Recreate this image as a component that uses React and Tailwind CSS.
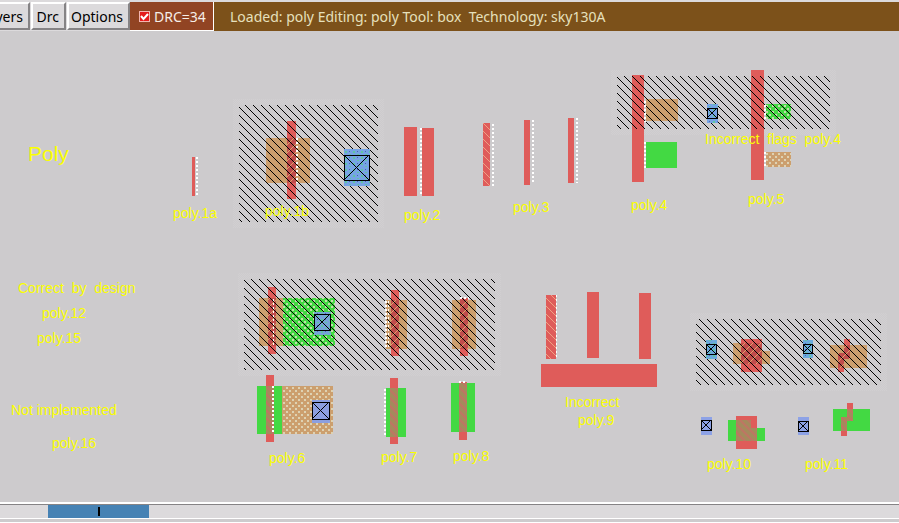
import React from "react";

const RED = "#df5c5a";
const GREEN = "#43d943";
const TAN = "#cc9f6e";

// [x, y, width, height] of every n-well region
const wells = [
  [239, 105, 139, 117],
  [617, 76, 213, 53],
  [244, 279, 251, 91],
  [696, 319, 185, 66],
];

const shapes = [
  [192, 157, 3, 39, RED],
  [266, 138, 44, 45, TAN],
  [287, 121, 9, 78, RED],
  [287, 138, 9, 45, "url(#gate)"],
  [404, 127, 13, 69, RED],
  [422, 128, 12, 68, RED],
  [483, 123, 7, 63, RED],
  [483, 123, 7, 63, "url(#resistor)"],
  [524, 120, 6, 65, RED],
  [568, 118, 6, 65, RED],
  [632, 75, 12, 107, RED],
  [646, 99, 32, 22, TAN],
  [646, 142, 31, 26, GREEN],
  [751, 70, 13, 110, RED],
  [766, 104, 25, 15, GREEN],
  [766, 104, 25, 15, "url(#dots)"],
  [766, 152, 25, 15, TAN],
  [766, 152, 25, 15, "url(#dots)"],
  [259, 298, 24, 48, TAN],
  [283, 298, 52, 48, GREEN],
  [283, 298, 52, 48, "url(#dots)"],
  [268, 287, 8, 67, RED],
  [268, 298, 8, 48, "url(#gate)"],
  [386, 300, 21, 49, TAN],
  [391, 290, 8, 66, RED],
  [391, 300, 8, 49, "url(#gate)"],
  [452, 300, 24, 49, TAN],
  [460, 298, 8, 58, RED],
  [460, 300, 8, 49, "url(#gate)"],
  [257, 386, 25, 48, GREEN],
  [282, 386, 51, 48, TAN],
  [282, 386, 51, 48, "url(#dots)"],
  [266, 375, 8, 67, RED],
  [266, 386, 8, 48, "url(#channel)"],
  [386, 388, 20, 49, GREEN],
  [390, 378, 8, 66, RED],
  [390, 388, 8, 49, "url(#channel)"],
  [451, 383, 24, 49, GREEN],
  [459, 382, 8, 58, RED],
  [459, 383, 8, 49, "url(#channel)"],
  [546, 295, 10, 64, RED],
  [546, 295, 10, 64, "url(#resistor)"],
  [587, 292, 12, 66, RED],
  [639, 293, 12, 66, RED],
  [541, 364, 116, 23, RED],
  [733, 343, 28, 21, TAN],
  [761, 351, 9, 13, TAN],
  [741, 339, 21, 33, RED],
  [741, 343, 21, 21, "url(#gate)"],
  [830, 345, 37, 23, TAN],
  [844, 339, 6, 20, RED],
  [838, 353, 6, 19, RED],
  [844, 345, 6, 14, "url(#gate)"],
  [838, 353, 6, 15, "url(#gate)"],
  [728, 420, 23, 21, GREEN],
  [751, 428, 14, 13, GREEN],
  [736, 416, 21, 33, RED],
  [736, 420, 15, 21, "url(#channel)"],
  [751, 428, 6, 13, "url(#channel)"],
  [833, 409, 37, 22, GREEN],
  [847, 403, 6, 18, RED],
  [841, 417, 6, 19, RED],
  [847, 409, 6, 12, "url(#channel)"],
  [841, 417, 6, 14, "url(#channel)"],
];

// [x, top, bottom] of every dotted error edge
const errors = [
  [197, 157, 196],
  [297, 138, 183],
  [421, 128, 196],
  [493, 124, 186],
  [533, 120, 184],
  [577, 118, 183],
  [645, 101, 122],
  [645, 142, 168],
  [765, 105, 120],
  [765, 152, 168],
  [386, 301, 349],
  [385, 389, 436],
  [273, 386, 434],
];

const fineErrors = [
  [273, 299, 346],
  [388, 301, 349],
  [556, 295, 359],
];

// [x, y, size, halo top, halo bottom, fill, speckled]
const contacts = [
  [344, 155, 25, 6, 5, "#76a4e4", true],
  [707, 108, 10, 4, 4, "#76a4e4", true],
  [314, 314, 16, 2, 4, "#76a3d8", true],
  [312, 402, 17, 2, 3, "#8c9fe0", false],
  [706, 344, 10, 4, 4, "#6caadc", true],
  [803, 344, 9, 4, 4, "#6caadc", true],
  [701, 420, 10, 3, 4, "#8da2e6", false],
  [798, 421, 10, 4, 3, "#8da2e6", false],
];

const labels = [
  [173, 218, "poly.1a"],
  [265, 216, "poly.1b"],
  [404, 220, "poly.2"],
  [513, 212, "poly.3"],
  [631, 210, "poly.4"],
  [748, 204, "poly.5"],
  [705, 144, "Incorrect  flags  poly.4"],
  [18, 293, "Correct  by  design"],
  [42, 318, "poly.12"],
  [37, 343, "poly.15"],
  [11, 415, "Not implemented"],
  [52, 448, "poly.16"],
  [269, 463, "poly.6"],
  [381, 462, "poly.7"],
  [453, 461, "poly.8"],
  [565, 407, "Incorrect"],
  [578, 425, "poly.9"],
  [707, 469, "poly.10"],
  [805, 469, "poly.11"],
];

function Contact({ x, y, size, top, bottom, fill, speckled }) {
  const right = x + size;
  const low = y + size;
  return (
    <g>
      <rect x={x} y={y - top} width={size + 1} height={size + top + bottom + 1} fill={fill} />
      {speckled && (
        <rect x={x} y={y - top} width={size + 1} height={size + top + bottom + 1} fill="url(#speckle)" />
      )}
      <path d={`M${x} ${y}L${right} ${low}M${right} ${y}L${x} ${low}`} stroke="#000" fill="none" />
      <rect x={x + 0.5} y={y + 0.5} width={size} height={size} stroke="#000" fill="none" />
    </g>
  );
}

function LayoutCanvas() {
  return (
    <svg viewBox="0 31 899 471" className="block h-full w-full" shapeRendering="crispEdges" role="img" aria-label="Poly layout">
      <defs>
        <pattern id="well" width="8" height="8" patternUnits="userSpaceOnUse">
          <path d="M4 0h1v1h-1zM5 1h1v1h-1zM6 2h1v1h-1zM7 3h1v1h-1zM0 4h1v1h-1zM1 5h1v1h-1zM2 6h1v1h-1zM3 7h1v1h-1z" fill="#000" />
        </pattern>
        <pattern id="halo" width="2" height="2" patternUnits="userSpaceOnUse">
          <path d="M0 0h1v1h-1zM1 1h1v1h-1z" fill="#d1cfd1" />
        </pattern>
        <pattern id="dots" width="6" height="6" patternUnits="userSpaceOnUse">
          <path d="M1 0h2v2h-2zM4 3h2v2h-2z" fill="#e2dec4" fillOpacity="0.8" />
        </pattern>
        <pattern id="gate" width="8" height="8" patternUnits="userSpaceOnUse">
          <rect width="8" height="8" fill="#c04c4c" />
          <path d="M-1 9L9 -1M-1 1L1 -1M7 9L9 7" stroke="#dfa06a" shapeRendering="auto" />
        </pattern>
        <pattern id="channel" width="8" height="8" patternUnits="userSpaceOnUse">
          <rect width="8" height="8" fill="#a58a5c" />
          <path d="M-1 -1L9 9M-1 7L1 9M7 -1L9 1" stroke="#bf7563" strokeWidth="2" shapeRendering="auto" />
        </pattern>
        <pattern id="resistor" width="8" height="8" patternUnits="userSpaceOnUse">
          <path d="M-1 -1L9 9M-1 7L1 9M7 -1L9 1" stroke="#f0a184" shapeRendering="auto" />
        </pattern>
        <pattern id="speckle" width="8" height="6" patternUnits="userSpaceOnUse">
          <path d="M1 1h2v2h-2zM5 4h2v1h-2z" fill="#5fc6a0" />
          <path d="M5 1h1v1h-1z" fill="#4c5fb5" />
        </pattern>
      </defs>

      {wells.map(([x, y, w, h]) => (
        <rect key={`${x}-${y}`} x={x - 6} y={y - 6} width={w + 12} height={h + 12} fill="url(#halo)" />
      ))}
      {wells.map(([x, y, w, h]) => (
        <rect key={`${x}-${y}`} x={x} y={y} width={w} height={h} fill="#cdcbcd" />
      ))}
      {shapes.map(([x, y, w, h, fill], i) => (
        <rect key={i} x={x} y={y} width={w} height={h} fill={fill} />
      ))}
      {wells.map(([x, y, w, h]) => (
        <rect key={`${x}-${y}`} x={x} y={y} width={w} height={h} fill="url(#well)" />
      ))}
      {errors.map(([x, top, bottom]) => (
        <path key={`${x}-${top}`} d={`M${x} ${top}V${bottom}`} stroke="#fff" strokeWidth="2" strokeDasharray="2 2" />
      ))}
      {fineErrors.map(([x, top, bottom]) => (
        <path key={`${x}-${top}`} d={`M${x + 0.5} ${top}V${bottom}`} stroke="#fff" strokeDasharray="2 2" />
      ))}
      <path d="M460 298H469M459 382H467" stroke="#fff" strokeWidth="2" strokeDasharray="2 2" />
      {contacts.map(([x, y, size, top, bottom, fill, speckled]) => (
        <Contact key={`${x}-${y}`} x={x} y={y} size={size} top={top} bottom={bottom} fill={fill} speckled={speckled} />
      ))}

      <g fill="#fbff00" className="font-['Liberation_Sans',sans-serif] text-[14px]">
        <text x="28" y="161" className="text-[21px]">Poly</text>
        {labels.map(([x, y, text]) => (
          <text key={`${x}-${y}`} x={x} y={y} className="whitespace-pre">{text}</text>
        ))}
      </g>
    </svg>
  );
}

const menuButton =
  "flex h-7 shrink-0 items-center justify-end overflow-hidden border-2 border-t-white border-l-white border-r-[#858385] border-b-[#858385] bg-[#dcdadc] whitespace-nowrap";

export default function App() {
  return (
    <div className="flex h-screen flex-col overflow-hidden bg-[#cdcbcd] font-['Noto_Sans',sans-serif] text-[14px] text-black">
      <header className="flex h-[31px] shrink-0 items-end bg-[#dcdadc]">
        <div className="flex h-[29px] shrink-0 gap-px">
          <button type="button" className={`${menuButton} w-[30px] border-l-0 pr-[5px]`}>Layers</button>
          <button type="button" className={`${menuButton} w-[35px] pr-[5px]`}>Drc</button>
          <button type="button" className={`${menuButton} w-[63px] pr-[5px]`}>Options</button>
        </div>
        <label className="flex h-[29px] w-[84px] shrink-0 items-center gap-1 border-r border-b border-white bg-[#914423] pl-[9px] whitespace-nowrap text-[#f5eee8]">
          <span className="relative flex size-[11px] shrink-0">
            <input
              type="checkbox"
              defaultChecked
              className="peer size-[11px] appearance-none border border-[#f3b5b0] bg-[#a04030] checked:bg-[#e51c1c]"
            />
            <svg viewBox="0 0 11 11" className="pointer-events-none absolute inset-0 hidden size-[11px] peer-checked:block" fill="none" stroke="#fff" strokeWidth="2">
              <path d="M2 5L4.500 8L9 3" />
            </svg>
          </span>
          DRC=34
        </label>
        <p className="flex h-[29px] flex-1 items-center overflow-hidden bg-[#7c511a] pl-4 whitespace-pre text-[#e6e0bd]">
          {"Loaded: poly Editing: poly Tool: box  Technology: sky130A"}
        </p>
      </header>

      <main className="min-h-0 flex-1">
        <LayoutCanvas />
      </main>

      <footer className="flex h-[21px] shrink-0 flex-col border-t-2 border-white">
        <div className="flex h-[14px] border-t border-[#858385] bg-[#dcdadc]">
          <div className="ml-[48px] flex w-[101px] items-center justify-center bg-[#4682b4]">
            <div className="h-[9px] w-[2px] bg-black" />
          </div>
        </div>
        <div className="h-[5px] border-y border-white bg-[#cdcbcd]" />
      </footer>
    </div>
  );
}
